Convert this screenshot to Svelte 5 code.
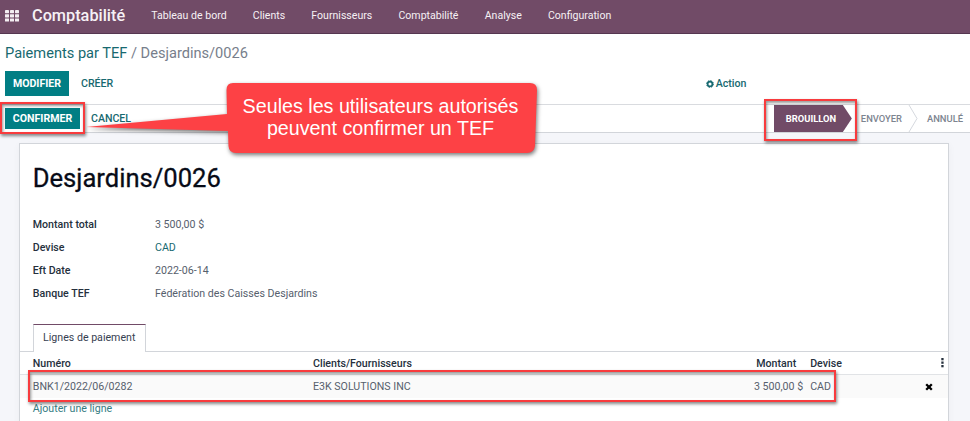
<script>
  const menu = ['Tableau de bord', 'Clients', 'Fournisseurs', 'Comptabilité', 'Analyse', 'Configuration'];
  const fields = [
    { label: 'Montant total', value: '3 500,00 $' },
    { label: 'Devise', value: 'CAD', link: true },
    { label: 'Eft Date', value: '2022-06-14' },
    { label: 'Banque TEF', value: 'Fédération des Caisses Desjardins' }
  ];
</script>

<div class="app">
  <nav>
    <svg class="grid" width="14" height="12" viewBox="0 0 14 12" fill="#f4eef2">
      {#each [0, 1, 2] as r}
        {#each [0, 1, 2] as c}
          <rect x={c * 5} y={r * 4.2} width="4" height="3.2" rx=".4" />
        {/each}
      {/each}
    </svg>
    <span class="brand">Comptabilité</span>
    <div class="menu">
      {#each menu as m}<span>{m}</span>{/each}
    </div>
  </nav>

  <header>
    <div class="crumbs"><span class="link">Paiements par TEF</span> / Desjardins/0026</div>
    <div class="buttons">
      <button class="primary">MODIFIER</button>
      <button class="flat">CRÉER</button>
      <span class="action">
        <svg width="8" height="8" viewBox="0 0 8 8"><circle cx="4" cy="4" r="2.4" fill="none" stroke="#176970" stroke-width="1.7" /><circle cx="4" cy="4" r="3.4" fill="none" stroke="#176970" stroke-width="1" stroke-dasharray="1.4 1.27" /></svg>
        Action
      </span>
    </div>
  </header>

  <div class="status">
    <button class="primary small">CONFIRMER</button>
    <button class="flat cancel">CANCEL</button>
    <div class="stages">
      <span class="current">BROUILLON</span>
      <span class="envoyer">ENVOYER</span>
      <svg width="10" height="27" viewBox="0 0 10 27"><path d="M1 0 9 13.5 1 27" fill="none" stroke="#d5d8de" /></svg>
      <span class="annule">ANNULÉ</span>
    </div>
  </div>

  <main>
    <section class="sheet">
      <h1>Desjardins/0026</h1>
      <div class="fields">
        {#each fields as f}
          <div class="field"><b>{f.label}</b><span class:link={f.link}>{f.value}</span></div>
        {/each}
      </div>
      <div class="tabs"><span class="tab">Lignes de paiement</span></div>
      <div class="row head">
        <span class="num">Numéro</span><span class="client">Clients/Fournisseurs</span>
        <span class="amount">Montant</span><span class="cur">Devise</span>
        <svg class="dots" width="3" height="10" viewBox="0 0 3 10" fill="#25303d"><rect x=".3" y="0" width="2.3" height="2.3" /><rect x=".3" y="3.5" width="2.3" height="2.3" /><rect x=".3" y="7" width="2.3" height="2.3" /></svg>
      </div>
      <div class="row line">
        <span class="num">BNK1/2022/06/0282</span><span class="client">E3K SOLUTIONS INC</span>
        <span class="amount">3 500,00 $</span><span class="cur">CAD</span>
        <svg class="x" width="8" height="8" viewBox="0 0 8 8"><path d="M1.2 1.2 6.8 6.8M6.8 1.2 1.2 6.8" stroke="#000" stroke-width="2.3" /></svg>
      </div>
      <div class="add">Ajouter une ligne</div>
    </section>
  </main>

  <div class="mark confirm"></div>
  <div class="mark stage"></div>
  <div class="mark payment"></div>
  <svg class="bubble" width="470" height="100" viewBox="0 0 470 100">
    <path d="M155 8H457Q464 8 464 15L462 71Q461 78 454 78H163Q156 78 155.500 71L155 56 13 52 154 39 153.500 15Q153.500 8 160 8Z" fill="#fd4145" />
  </svg>
  <div class="message"><span class="m1">Seules les utilisateurs autorisés</span><span class="m2">peuvent confirmer un TEF</span></div>
</div>

<style>
  :global(body) { margin: 0; }
  .app { position: relative; width: 970px; height: 421px; overflow: hidden; display: flex; flex-direction: column; background: #fff; font: 10.64px Roboto, sans-serif; color: #56606d; white-space: nowrap; }
  .app * { box-sizing: border-box; }
  nav { height: 34px; flex: none; display: flex; align-items: center; padding: 0 0 2px 5px; background: #714b67; border-bottom: 1px solid #553650; color: #f6f1f5; }
  .brand { margin-left: 13px; width: 93px; font-size: 16.3px; font-weight: 500; }
  .menu { display: flex; gap: 26.2px; margin-left: 26.3px; font-size: 10.57px; padding-bottom: 1px; }
  header { height: 71px; flex: none; padding: 10px 5px 0; border-bottom: 1px solid #d9dbdf; }
  .crumbs { height: 19px; line-height: 18px; font-size: 14.6px; color: #777e8b; }
  .link { color: #176970; }
  .buttons { display: flex; align-items: center; height: 25px; margin-top: 8px; }
  button { border: 0; padding: 0; font: 500 10.6px Roboto, sans-serif; text-align: center; }
  .primary { width: 64px; height: 25px; background: #017e84; color: #fff; font-weight: 700; }
  .flat { background: none; color: #176970; margin-left: 12px; }
  .action { display: flex; align-items: center; gap: 2px; margin-left: 592.5px; font-weight: 500; color: #176970; }
  .status { height: 28px; flex: none; display: flex; align-items: center; padding-left: 5px; border-bottom: 1px solid #d2d5da; }
  .small { width: 75px; height: 21px; }
  .cancel { margin-left: 11px; }
  .stages { display: flex; align-items: center; height: 27px; margin-left: auto; padding-right: 7px; font-size: 9.4px; font-weight: 500; color: #7d848f; }
  .current { width: 78px; height: 27px; line-height: 27px; padding-left: 12px; background: #714b67; color: #fff; font-weight: 700; clip-path: polygon(0 0, 69px 0, 100% 50%, 69px 100%, 0 100%); }
  .envoyer { margin: 0 6px 0 9px; }
  .annule { margin-left: 9px; }
  main { flex: 1; padding: 10px 21px 0 19px; background: #f5f6fa; }
  .sheet { height: 290px; background: #fff; border: 1px solid #d2d5da; box-shadow: 0 2px 8px #0000000a; }
  h1 { margin: 17px 0 0 12.7px; height: 34px; font-size: 25.6px; line-height: 34px; font-weight: 400; color: #070b17; -webkit-text-stroke: .3px #070b17; }
  .fields { margin: 18px 0 0 12.8px; }
  .field { display: flex; height: 23px; line-height: 23px; }
  .field b { width: 122.2px; font-weight: 500; color: #25303d; }
  .tabs { display: flex; height: 28px; margin-top: 19px; padding-left: 13px; border-bottom: 1px solid #d2d5da; }
  .tab { width: 113px; height: 28px; line-height: 26px; padding-left: 9px; background: #fff; border: 1px solid #d2d5da; border-top-color: #714b67; border-bottom: 0; color: #374151; }
  .row { display: flex; align-items: center; height: 23px; padding-left: 12.8px; }
  .head { color: #25303d; font-weight: 500; border-bottom: 1px solid #e1e3e6; }
  .line { background: #fafafa; }
  .num { flex: none; width: 280.2px; }
  .client { flex: none; width: 380px; }
  .amount { flex: none; width: 110.2px; text-align: right; }
  .head .amount { padding-right: 7px; }
  .cur { flex: none; width: 138px; padding-left: 7px; }
  .dots { flex: none; }
  .x { flex: none; margin-left: -16px; }
  .add { padding-left: 12.8px; height: 22px; line-height: 21px; color: #357c82; }
  .mark { position: absolute; border: 2px solid #f83b3d; box-shadow: 1px 2px 3px #0007, inset 1px 2px 3px #0006; }
  .confirm { left: 0; top: 102px; width: 85px; height: 32px; }
  .stage { left: 764px; top: 99px; width: 93px; height: 42px; }
  .payment { left: 28px; top: 370px; width: 808px; height: 32px; }
  .bubble { position: absolute; left: 73px; top: 75px; filter: drop-shadow(1px 2px 2px #0008); }
  .message { position: absolute; left: 229px; top: 95px; width: 303px; display: flex; flex-direction: column; align-items: center; font: 19.7px/22px "Liberation Sans", Arial, sans-serif; color: #fff; }
</style>
